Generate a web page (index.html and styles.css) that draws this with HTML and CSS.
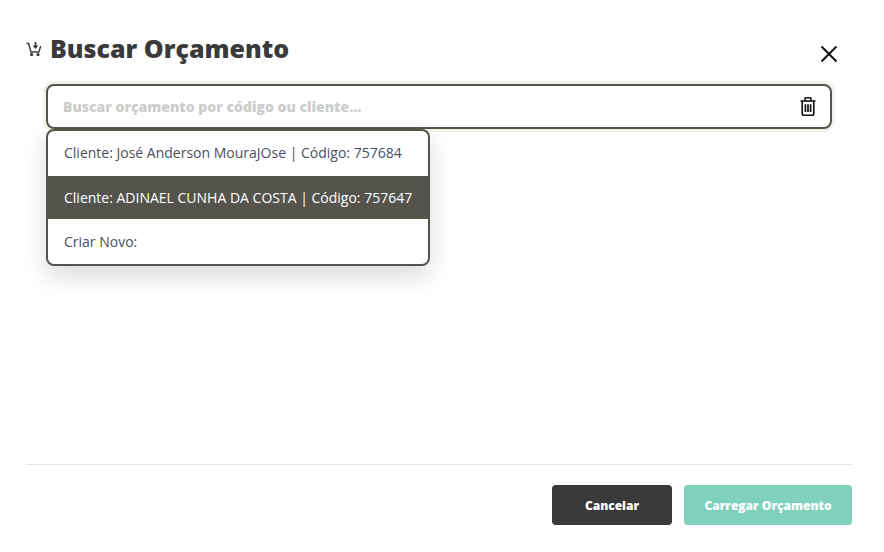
FILE: index.html
```html
<!DOCTYPE html>
<html lang="pt-BR">
<head>
<meta charset="utf-8">
<title>Buscar Orçamento</title>
<link rel="stylesheet" href="styles.css">
</head>
<body>
<div class="modal">
  <header class="modal-header">
    <h1 class="title">
      <svg class="cart-icon" width="16" height="16" viewBox="0 0 16 16" fill="none" stroke="#3a3a3a" stroke-width="1.4">
        <path d="M0.5 2.5h2.2l2.2 8.5h8l1.8-6"/>
        <path d="M9.5 1v5.5" stroke-width="1.8"/>
        <path d="M6.6 4.6h5.8L9.5 8z" fill="#3a3a3a" stroke="none"/>
        <circle cx="5.6" cy="13.6" r="1.6" fill="#3a3a3a" stroke="none"/>
        <circle cx="12" cy="13.6" r="1.6" fill="#3a3a3a" stroke="none"/>
      </svg>
      <span>Buscar Orçamento</span>
    </h1>
    <button class="close" aria-label="Fechar">
      <svg width="18" height="18" viewBox="0 0 18 18" fill="none" stroke="#111" stroke-width="2">
        <path d="M1.5 1.5l15 15M16.5 1.5l-15 15"/>
      </svg>
    </button>
  </header>
  <div class="search">
    <div class="search-box">
      <span class="placeholder">Buscar orçamento por código ou cliente...</span>
      <svg class="trash" width="16" height="19" viewBox="0 0 16 19" fill="none" stroke="#111" stroke-width="1.6">
        <path d="M0.5 4h15"/>
        <path d="M5 3.6V1.6q0-.8.8-.8h4.4q.8 0 .8.8v2"/>
        <path d="M2.2 4.2v12.2q0 1.8 1.8 1.8h8q1.8 0 1.8-1.8V4.2"/>
        <path d="M5.4 7.2v7.8M8 7.2v7.8M10.6 7.2v7.8" stroke-width="1.7"/>
      </svg>
    </div>
    <ul class="results">
      <li class="result">Cliente: José Anderson MouraJOse | Código: 757684</li>
      <li class="result result-active">Cliente: ADINAEL CUNHA DA COSTA | Código: 757647</li>
      <li class="result result-last">Criar Novo:</li>
    </ul>
  </div>
  <footer class="modal-footer">
    <button class="btn btn-dark">Cancelar</button>
    <button class="btn btn-green">Carregar Orçamento</button>
  </footer>
</div>
</body>
</html>
```
FILE: styles.css
```css
* { box-sizing: border-box; }
html, body { margin: 0; height: 100%; background: #fff; overflow: hidden; }
body { font-family: "Open Sans", sans-serif; color: #3a3a3a; }
.modal {
  width: 884px;
  height: 552px;
  padding: 30px 32px 27px 26px;
  display: flex;
  flex-direction: column;
}
.modal-header {
  display: flex;
  justify-content: space-between;
  align-items: flex-start;
  height: 54px;
}
.title {
  margin: 0;
  display: flex;
  align-items: center;
  gap: 8px;
  font-size: 25px;
  line-height: 36px;
  font-weight: 800;
  color: #3a3a3a;
}
.cart-icon { margin-top: 2px; }
.close {
  margin: 15px 14px 0 0;
  padding: 0;
  width: 18px;
  height: 18px;
  border: 0;
  background: none;
  display: flex;
}
.search { position: relative; margin: 0 20px; }
.search-box {
  height: 45px;
  border: 2px solid #55544c;
  border-radius: 8px;
  box-shadow: 0 0 0 3px #eef5ec;
  padding: 0 14px 0 15px;
  display: flex;
  align-items: center;
  justify-content: space-between;
  background: #fff;
}
.placeholder { font-size: 14px; font-weight: 800; color: #ccc; }
.results {
  position: absolute;
  top: 45px;
  left: 0;
  width: 384px;
  margin: 0;
  padding: 0;
  list-style: none;
  background: #fff;
  border: 2px solid #55544c;
  border-radius: 8px;
  overflow: hidden;
  box-shadow: 0 10px 25px rgba(0, 0, 0, 0.15);
}
.result {
  height: 45px;
  padding: 0 16px;
  font-size: 14px;
  line-height: 44px;
  color: #4a4f5c;
  white-space: nowrap;
}
.result-active { height: 43px; line-height: 43px; background: #55544c; color: #fff; font-weight: 500; }
.result-last { line-height: 46px; }
.modal-footer {
  margin-top: auto;
  border-top: 1px solid #e5e5e5;
  padding-top: 20px;
  display: flex;
  justify-content: flex-end;
  gap: 12px;
}
.btn {
  height: 40px;
  border: 0;
  border-radius: 4px;
  font-family: inherit;
  font-size: 12px;
  font-weight: 800;
  color: #fff;
  padding: 0;
}
.btn-dark { width: 120px; background: #3a3a3a; }
.btn-green { width: 168px; background: #7fd1bb; }
```
